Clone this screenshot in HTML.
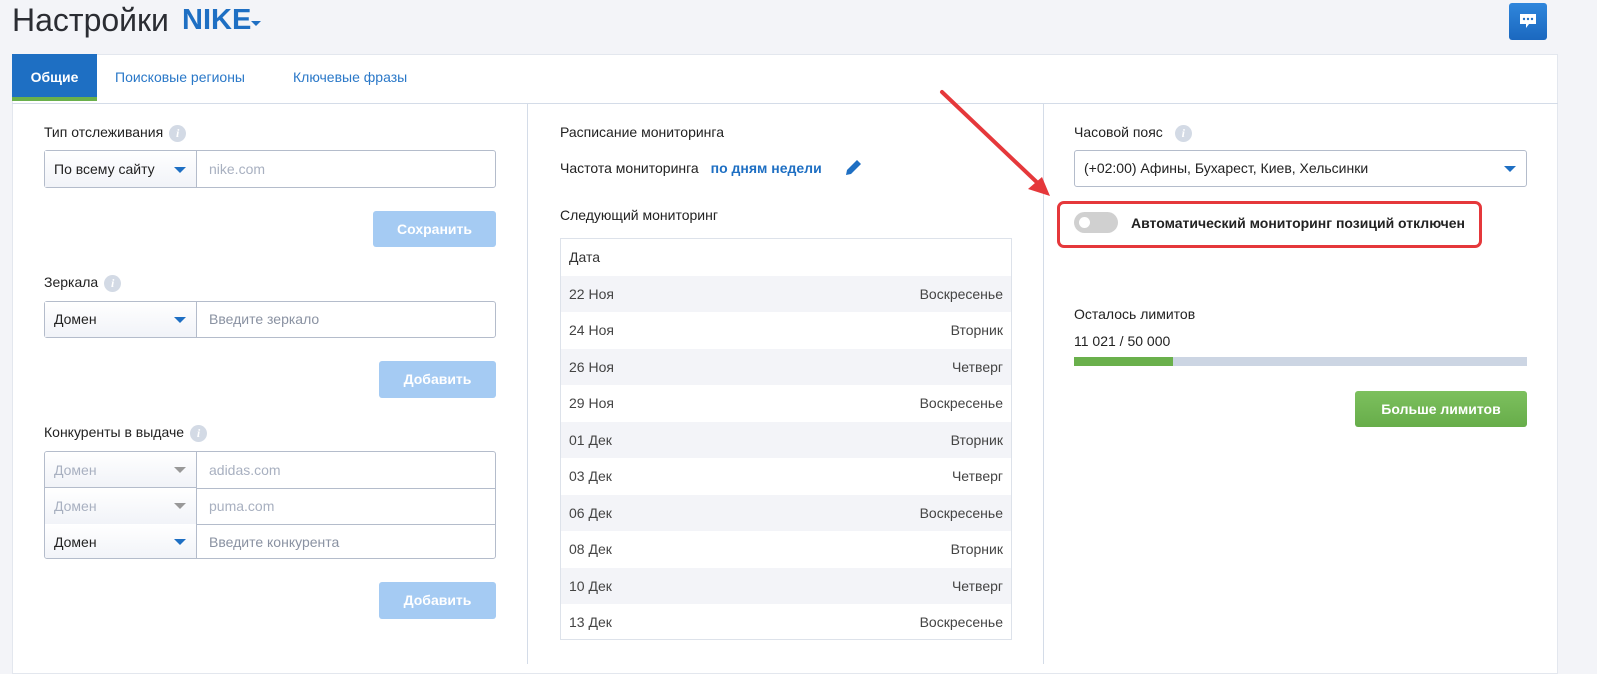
<!DOCTYPE html>
<html><head><meta charset="utf-8"><style>
*{box-sizing:border-box;margin:0;padding:0}
body{width:1597px;height:660px;overflow:hidden;background:#f3f4f8;font-family:"Liberation Sans",Roboto,sans-serif;color:#222;font-size:14px;position:relative}
.a{position:absolute}
.t{font-size:32px;color:#2b2d33;left:12px;top:2px}
.nike{color:#1e6fc3;font-weight:bold;left:182px;top:4px;font-size:29px}
.card{left:12px;top:54px;width:1546px;height:620px;background:#fff;border:1px solid #e3e7ee}
.tab{top:54px;height:47px;line-height:47px;font-size:14px;color:#2a78c8}
.lbl{font-size:14px;color:#222}
.info{display:inline-block;width:17px;height:17px;border-radius:50%;background:#d3dae5;color:#fff;font-size:12px;font-weight:bold;font-style:italic;text-align:center;line-height:17px;font-family:"Liberation Serif",serif;vertical-align:middle;margin-left:6px}
.inp{border:1px solid #b4bccb;border-radius:3px;background:#fff}
.sel{background:linear-gradient(#fff,#f1f3f8);border-right:1px solid #b4bccb;position:absolute;top:0;bottom:0;left:0;width:152px;padding-left:9px;font-size:14px}
.tri{position:absolute;right:10px;width:0;height:0;border-left:6px solid transparent;border-right:6px solid transparent;border-top:6px solid #1e6fc3}
.btn{border-radius:3px;color:#fff;font-weight:bold;font-size:14px;text-align:center}
.row{position:absolute;left:0;right:0;height:36.5px;line-height:36.5px;padding:0 8px;font-size:14px;color:#444}
.row span{float:right}
</style></head><body>
<div class="a t">Настройки</div>
<div class="a nike">NIKE</div>
<div class="a" style="left:251px;top:21px;border-left:5px solid transparent;border-right:5px solid transparent;border-top:5px solid #1e6fc3"></div>
<div class="a" style="left:1509px;top:3px;width:38px;height:37px;border-radius:3px;background:linear-gradient(#2f86dc,#1b68bf)">
<svg width="38" height="37"><path d="M11 11h16v10h-7l-3 4v-4h-6z" fill="#fff"/><circle cx="15" cy="16" r="1.2" fill="#1e6fc3"/><circle cx="19" cy="16" r="1.2" fill="#1e6fc3"/><circle cx="23" cy="16" r="1.2" fill="#1e6fc3"/></svg></div>
<div class="a card"></div>
<div class="a" style="left:12px;top:103px;width:1546px;height:1px;background:#d4dce8"></div>
<div class="a" style="left:12px;top:54px;width:85px;height:47px;background:#1e6fc3;border-bottom:4px solid #6ab04c;color:#fff;font-weight:bold;text-align:center;line-height:47px">Общие</div>
<div class="a tab" style="left:115px">Поисковые регионы</div>
<div class="a tab" style="left:293px">Ключевые фразы</div>
<div class="a" style="left:527px;top:104px;width:1px;height:560px;background:#d4dce8"></div>
<div class="a" style="left:1043px;top:104px;width:1px;height:560px;background:#d4dce8"></div>

<!-- left -->
<div class="a lbl" style="left:44px;top:124px">Тип отслеживания<span class="info">i</span></div>
<div class="a inp" style="left:44px;top:150px;width:452px;height:38px"><div class="sel" style="line-height:36px">По всему сайту<div class="tri" style="top:16px"></div></div><div class="a" style="left:164px;line-height:36px;color:#a8b0c0">nike.com</div></div>
<div class="a btn" style="left:373px;top:211px;width:123px;height:36px;line-height:36px;background:#a5cbf3">Сохранить</div>
<div class="a lbl" style="left:44px;top:274px">Зеркала<span class="info">i</span></div>
<div class="a inp" style="left:44px;top:301px;width:452px;height:37px"><div class="sel" style="line-height:35px">Домен<div class="tri" style="top:15px"></div></div><div class="a" style="left:164px;line-height:35px;color:#8a92a2">Введите зеркало</div></div>
<div class="a btn" style="left:379px;top:361px;width:117px;height:37px;line-height:37px;background:#a5cbf3">Добавить</div>
<div class="a lbl" style="left:44px;top:424px">Конкуренты в выдаче<span class="info">i</span></div>
<div class="a inp" style="left:44px;top:451px;width:452px;height:108px;overflow:hidden">
<div class="sel" style="height:36px;bottom:auto;line-height:36px;color:#a8b0c0;border-bottom:1px solid #b4bccb">Домен<div class="tri" style="top:15px;border-top-color:#999"></div></div>
<div class="a" style="left:164px;top:0;line-height:36px;color:#a8b0c0">adidas.com</div>
<div class="a" style="left:0;right:0;top:36px;height:1px;background:#b4bccb"></div>
<div class="sel" style="top:36px;height:36px;bottom:auto;line-height:36px;color:#a8b0c0">Домен<div class="tri" style="top:15px;border-top-color:#999"></div></div>
<div class="a" style="left:164px;top:36px;line-height:36px;color:#a8b0c0">puma.com</div>
<div class="a" style="left:0;right:0;top:72px;height:1px;background:#b4bccb"></div>
<div class="sel" style="top:72px;height:36px;bottom:auto;line-height:36px">Домен<div class="tri" style="top:15px"></div></div>
<div class="a" style="left:164px;top:72px;line-height:36px;color:#8a92a2">Введите конкурента</div>
</div>
<div class="a btn" style="left:379px;top:582px;width:117px;height:37px;line-height:37px;background:#a5cbf3">Добавить</div>

<!-- middle -->
<div class="a lbl" style="left:560px;top:124px">Расписание мониторинга</div>
<div class="a lbl" style="left:560px;top:160px">Частота мониторинга <span style="color:#1e6fc3;font-weight:bold;margin-left:8px">по дням недели</span></div>
<svg class="a" style="left:844px;top:157px" width="20" height="20"><path d="M2 18l1-5L13 3l4 4L7 17z" fill="#1e6fc3"/></svg>
<div class="a lbl" style="left:560px;top:207px">Следующий мониторинг</div>
<div class="a" style="left:560px;top:238px;width:452px;height:402px;border:1px solid #dde2ea;overflow:hidden">
<div class="row" style="top:0;color:#333">Дата</div>
<div class="row" style="top:36.5px;background:#f3f4f8">22 Ноя<span>Воскресенье</span></div>
<div class="row" style="top:73px">24 Ноя<span>Вторник</span></div>
<div class="row" style="top:109.5px;background:#f3f4f8">26 Ноя<span>Четверг</span></div>
<div class="row" style="top:146px">29 Ноя<span>Воскресенье</span></div>
<div class="row" style="top:182.5px;background:#f3f4f8">01 Дек<span>Вторник</span></div>
<div class="row" style="top:219px">03 Дек<span>Четверг</span></div>
<div class="row" style="top:255.5px;background:#f3f4f8">06 Дек<span>Воскресенье</span></div>
<div class="row" style="top:292px">08 Дек<span>Вторник</span></div>
<div class="row" style="top:328.5px;background:#f3f4f8">10 Дек<span>Четверг</span></div>
<div class="row" style="top:365px">13 Дек<span>Воскресенье</span></div>
</div>

<!-- right -->
<div class="a lbl" style="left:1074px;top:124px">Часовой пояс<span class="info" style="margin-left:12px">i</span></div>
<div class="a inp" style="left:1074px;top:150px;width:453px;height:37px;line-height:35px;padding-left:9px">(+02:00) Афины, Бухарест, Киев, Хельсинки<div class="tri" style="top:15px"></div></div>
<div class="a" style="left:1057px;top:201px;width:425px;height:47px;border:3px solid #e5383b;border-radius:7px"></div>
<div class="a" style="left:1074px;top:212px;width:44px;height:21px;border-radius:11px;background:#d0d0d0"><div class="a" style="left:5px;top:5px;width:11px;height:11px;border-radius:50%;background:#fff"></div></div>
<div class="a" style="left:1131px;top:215px;font-weight:bold;font-size:14px;color:#222">Автоматический мониторинг позиций отключен</div>
<svg class="a" style="left:930px;top:85px" width="130" height="120"><line x1="12" y1="7" x2="114" y2="104" stroke="#e5383b" stroke-width="4" stroke-linecap="round"/><path d="M120 111L98 104L112 92z" fill="#e5383b"/></svg>
<div class="a lbl" style="left:1074px;top:306px">Осталось лимитов</div>
<div class="a lbl" style="left:1074px;top:333px">11 021 / 50 000</div>
<div class="a" style="left:1074px;top:357px;width:453px;height:9px;background:#ccd5e3"><div style="width:99px;height:9px;background:#6ab04c"></div></div>
<div class="a btn" style="left:1355px;top:391px;width:172px;height:36px;line-height:36px;background:linear-gradient(#7dc05e,#67ad4a)">Больше лимитов</div>
</body></html>
